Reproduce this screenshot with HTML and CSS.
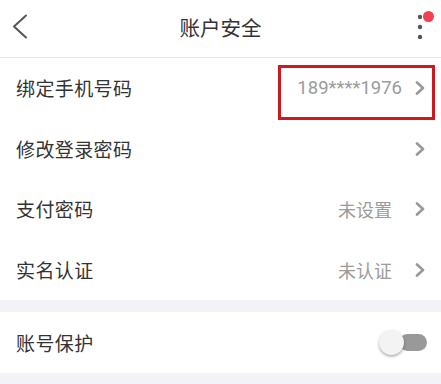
FILE: index.html
```html
<!DOCTYPE html>
<html lang="zh-CN">
<head>
<meta charset="utf-8">
<title>账户安全</title>
<link rel="stylesheet" href="styles.css">
</head>
<body>
<div class="page">
  <header class="topbar">
    <svg class="back" width="20" height="26" viewBox="0 0 20 26"><polyline points="14,1.5 2,12.5 14,23.5" fill="none" stroke="#555" stroke-width="2" stroke-linecap="round" stroke-linejoin="round"/></svg>
    <h1 class="title">账户安全</h1>
    <svg class="more" width="22" height="32" viewBox="0 0 22 32"><circle cx="5" cy="10" r="2.2" fill="#555"/><circle cx="5" cy="20" r="2.2" fill="#555"/><circle cx="5" cy="30" r="2.2" fill="#555"/><circle cx="13.5" cy="9.5" r="5.5" fill="#f2404e"/></svg>
  </header>

  <section class="group">
    <div class="row">
      <span class="label">绑定手机号码</span>
      <span class="value phone">189****1976</span>
      <svg class="chev" width="10" height="14" viewBox="0 0 10 14"><polyline points="2,1.5 8,7 2,12.5" fill="none" stroke="#999" stroke-width="2.6" stroke-linecap="round" stroke-linejoin="round"/></svg>
      <div class="mark"></div>
    </div>
    <div class="row">
      <span class="label">修改登录密码</span>
      <svg class="chev" width="10" height="14" viewBox="0 0 10 14"><polyline points="2,1.5 8,7 2,12.5" fill="none" stroke="#999" stroke-width="2.6" stroke-linecap="round" stroke-linejoin="round"/></svg>
    </div>
    <div class="row">
      <span class="label">支付密码</span>
      <span class="value status">未设置</span>
      <svg class="chev" width="10" height="14" viewBox="0 0 10 14"><polyline points="2,1.5 8,7 2,12.5" fill="none" stroke="#999" stroke-width="2.6" stroke-linecap="round" stroke-linejoin="round"/></svg>
    </div>
    <div class="row">
      <span class="label">实名认证</span>
      <span class="value status">未认证</span>
      <svg class="chev" width="10" height="14" viewBox="0 0 10 14"><polyline points="2,1.5 8,7 2,12.5" fill="none" stroke="#999" stroke-width="2.6" stroke-linecap="round" stroke-linejoin="round"/></svg>
    </div>
  </section>

  <div class="gap"></div>

  <section class="group">
    <div class="row toggle-row">
      <span class="label">账号保护</span>
      <div class="switch">
        <div class="track"></div>
        <div class="thumb"></div>
      </div>
    </div>
  </section>

  <div class="gap"></div>
</div>
</body>
</html>
```

FILE: styles.css
```css
* { box-sizing: border-box; }
html, body { margin: 0; padding: 0; background: #fff; }
body {
  font-family: "Noto Sans", "Noto Sans CJK SC", sans-serif;
  color: #333;
}
.page { width: 441px; height: 384px; overflow: hidden; background: #fff; }

.topbar {
  height: 58px;
  border-bottom: 1px solid #e6e6e6;
  display: grid;
  grid-template-columns: 60px 1fr 60px;
  align-items: center;
}
.back { display: block; margin-left: 12px; margin-top: -3px; }
.title {
  margin: 0;
  margin-top: -3px;
  text-align: center;
  font-size: 20.5px;
  font-weight: 400;
  color: #333;
}
.more { display: block; justify-self: end; align-self: start; margin: 7px 4px 0 0; }

.group { background: #fff; }
.row {
  height: 60.5px;
  display: flex;
  align-items: center;
  padding: 0 16px;
  position: relative;
}
.label { flex: 1; font-size: 19px; color: #333; letter-spacing: 0.4px; }
.value { font-size: 18px; color: #9b9b9b; }
.value.phone { font-family: Roboto, "Noto Sans", sans-serif; font-size: 18.5px; margin-right: 13px; }
.value.status { margin-right: 23px; }
.chev { display: block; flex: none; }

.mark {
  position: absolute;
  left: 278px;
  top: 7px;
  width: 157px;
  height: 55px;
  border: 3px solid #cc1b1f;
}

.gap { height: 12px; background: #f3f3f7; }
.toggle-row { height: 61px; }

.switch { position: relative; width: 48px; height: 25px; margin-right: -2px; }
.track {
  position: absolute;
  left: 20px;
  top: 4px;
  width: 28px;
  height: 17px;
  border-radius: 8.5px;
  background: #999;
}
.thumb {
  position: absolute;
  left: 0;
  top: 0;
  width: 25px;
  height: 25px;
  border-radius: 50%;
  background: #f3f3f3;
  box-shadow: 0 1.5px 3px rgba(0, 0, 0, 0.35);
}
```
